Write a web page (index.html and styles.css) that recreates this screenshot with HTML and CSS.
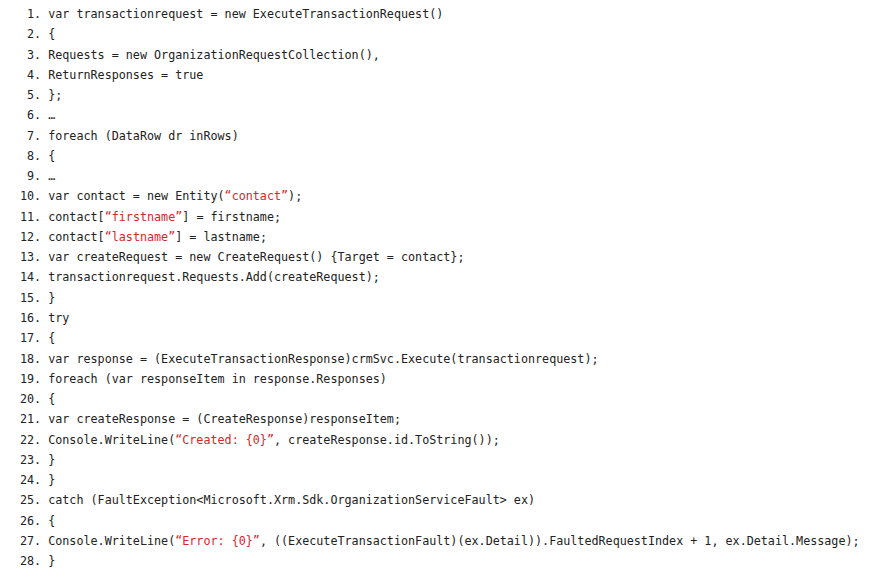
FILE: index.html
```html
<!DOCTYPE html>
<html>
<head>
<meta charset="utf-8">
<link rel="stylesheet" href="styles.css">
</head>
<body>
<div class="code">
<div class="ln"><span class="n">1.</span><span class="c">var transactionrequest = new ExecuteTransactionRequest()</span></div>
<div class="ln"><span class="n">2.</span><span class="c">{</span></div>
<div class="ln"><span class="n">3.</span><span class="c">Requests = new OrganizationRequestCollection(),</span></div>
<div class="ln"><span class="n">4.</span><span class="c">ReturnResponses = true</span></div>
<div class="ln"><span class="n">5.</span><span class="c">};</span></div>
<div class="ln"><span class="n">6.</span><span class="c">…</span></div>
<div class="ln"><span class="n">7.</span><span class="c">foreach (DataRow dr inRows)</span></div>
<div class="ln"><span class="n">8.</span><span class="c">{</span></div>
<div class="ln"><span class="n">9.</span><span class="c">…</span></div>
<div class="ln"><span class="n">10.</span><span class="c">var contact = new Entity(<span class="s">“contact”</span>);</span></div>
<div class="ln"><span class="n">11.</span><span class="c">contact[<span class="s">“firstname”</span>] = firstname;</span></div>
<div class="ln"><span class="n">12.</span><span class="c">contact[<span class="s">“lastname”</span>] = lastname;</span></div>
<div class="ln"><span class="n">13.</span><span class="c">var createRequest = new CreateRequest() {Target = contact};</span></div>
<div class="ln"><span class="n">14.</span><span class="c">transactionrequest.Requests.Add(createRequest);</span></div>
<div class="ln"><span class="n">15.</span><span class="c">}</span></div>
<div class="ln"><span class="n">16.</span><span class="c">try</span></div>
<div class="ln"><span class="n">17.</span><span class="c">{</span></div>
<div class="ln"><span class="n">18.</span><span class="c">var response = (ExecuteTransactionResponse)crmSvc.Execute(transactionrequest);</span></div>
<div class="ln"><span class="n">19.</span><span class="c">foreach (var responseItem in response.Responses)</span></div>
<div class="ln"><span class="n">20.</span><span class="c">{</span></div>
<div class="ln"><span class="n">21.</span><span class="c">var createResponse = (CreateResponse)responseItem;</span></div>
<div class="ln"><span class="n">22.</span><span class="c">Console.WriteLine(<span class="s">“Created: {0}”</span>, createResponse.id.ToString());</span></div>
<div class="ln"><span class="n">23.</span><span class="c">}</span></div>
<div class="ln"><span class="n">24.</span><span class="c">}</span></div>
<div class="ln"><span class="n">25.</span><span class="c">catch (FaultException&lt;Microsoft.Xrm.Sdk.OrganizationServiceFault&gt; ex)</span></div>
<div class="ln"><span class="n">26.</span><span class="c">{</span></div>
<div class="ln"><span class="n">27.</span><span class="c">Console.WriteLine(<span class="s">“Error: {0}”</span>, ((ExecuteTransactionFault)(ex.Detail)).FaultedRequestIndex + 1, ex.Detail.Message);</span></div>
<div class="ln"><span class="n">28.</span><span class="c">}</span></div>
</div>
</body>
</html>
```
FILE: styles.css
```css
html, body {
  margin: 0;
  padding: 0;
  background: #ffffff;
}
.code {
  padding: 4px 0 0 20px;
  font-family: "DejaVu Sans Mono", "Liberation Mono", monospace;
  font-size: 11.73px;
  line-height: 20.26px;
  color: #222222;
}
.ln {
  display: flex;
  white-space: pre;
}
.n {
  width: 3ch;
  text-align: right;
  margin-right: 1ch;
  flex: none;
}
.s {
  color: #d9252a;
}
```
